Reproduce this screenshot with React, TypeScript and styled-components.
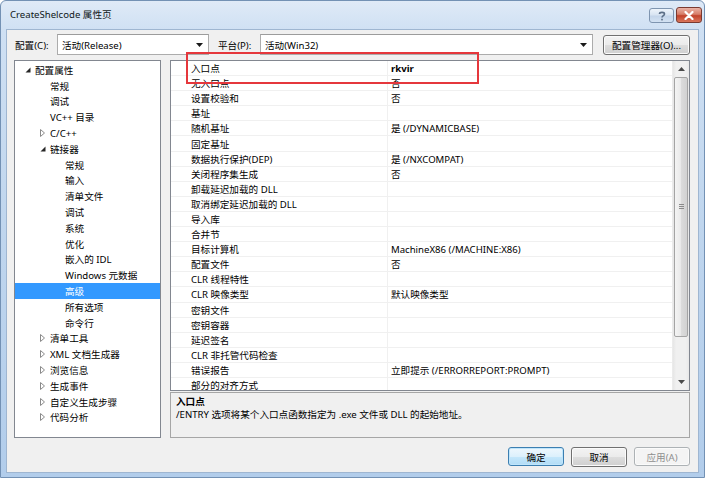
import React from 'react';
import styled, { createGlobalStyle } from 'styled-components';

const GlobalStyle = createGlobalStyle`
  html, body {
    margin: 0;
    padding: 0;
    background: #ffffff;
  }
  body {
    font-family: "Noto Sans", "Noto Sans CJK SC", sans-serif;
    font-size: 9.6px;
    color: #000000;
  }
  * {
    box-sizing: border-box;
  }
`;

type TreeItem = {
  label: string;
  level: number;
  arrow?: 'open' | 'closed';
  selected?: boolean;
};

const treeItems: TreeItem[] = [
  { label: '配置属性', level: 0, arrow: 'open' },
  { label: '常规', level: 1 },
  { label: '调试', level: 1 },
  { label: 'VC++ 目录', level: 1 },
  { label: 'C/C++', level: 1, arrow: 'closed' },
  { label: '链接器', level: 1, arrow: 'open' },
  { label: '常规', level: 2 },
  { label: '输入', level: 2 },
  { label: '清单文件', level: 2 },
  { label: '调试', level: 2 },
  { label: '系统', level: 2 },
  { label: '优化', level: 2 },
  { label: '嵌入的 IDL', level: 2 },
  { label: 'Windows 元数据', level: 2 },
  { label: '高级', level: 2, selected: true },
  { label: '所有选项', level: 2 },
  { label: '命令行', level: 2 },
  { label: '清单工具', level: 1, arrow: 'closed' },
  { label: 'XML 文档生成器', level: 1, arrow: 'closed' },
  { label: '浏览信息', level: 1, arrow: 'closed' },
  { label: '生成事件', level: 1, arrow: 'closed' },
  { label: '自定义生成步骤', level: 1, arrow: 'closed' },
  { label: '代码分析', level: 1, arrow: 'closed' },
];

type Prop = { name: string; value?: string; bold?: boolean };

const props: Prop[] = [
  { name: '入口点', value: 'rkvir', bold: true },
  { name: '无入口点', value: '否' },
  { name: '设置校验和', value: '否' },
  { name: '基址' },
  { name: '随机基址', value: '是 (/DYNAMICBASE)' },
  { name: '固定基址' },
  { name: '数据执行保护(DEP)', value: '是 (/NXCOMPAT)' },
  { name: '关闭程序集生成', value: '否' },
  { name: '卸载延迟加载的 DLL' },
  { name: '取消绑定延迟加载的 DLL' },
  { name: '导入库' },
  { name: '合并节' },
  { name: '目标计算机', value: 'MachineX86 (/MACHINE:X86)' },
  { name: '配置文件', value: '否' },
  { name: 'CLR 线程特性' },
  { name: 'CLR 映像类型', value: '默认映像类型' },
  { name: '密钥文件' },
  { name: '密钥容器' },
  { name: '延迟签名' },
  { name: 'CLR 非托管代码检查' },
  { name: '错误报告', value: '立即提示 (/ERRORREPORT:PROMPT)' },
  { name: '部分的对齐方式' },
];

const Window = styled.div`
  width: 705px;
  height: 478px;
  display: flex;
  flex-direction: column;
  padding: 0 6px 5px 6px;
  background: linear-gradient(180deg, #dfeaf7 0px, #cfe0f3 30px, #c0d6ee 220px, #b2cdeb 100%);
  border: 1px solid #7391b4;
  border-radius: 6px 6px 0 0;
`;

const TitleBar = styled.div`
  height: 29px;
  display: flex;
  align-items: flex-start;
  padding-left: 3px;
`;

const TitleText = styled.div`
  margin-top: 7px;
  line-height: 14px;
  color: #101820;
`;

const CaptionButtons = styled.div`
  margin-left: auto;
  margin-right: -4px;
  display: flex;
  gap: 2px;
  padding-top: 6px;
`;

const CaptionButton = styled.div<{ $close?: boolean }>`
  width: ${p => (p.$close ? 26 : 25)}px;
  height: ${p => (p.$close ? 16 : 15)}px;
  margin-top: ${p => (p.$close ? 0 : 1)}px;
  border-radius: 3px;
  border: 1px solid ${p => (p.$close ? '#7a3a30' : '#7f95b0')};
  background: ${p =>
    p.$close
      ? 'linear-gradient(180deg, #eab3a6 0%, #d77d68 45%, #c2422a 55%, #d9765c 100%)'
      : 'linear-gradient(180deg, #eef4fb 0%, #d8e4f2 45%, #c4d5ea 55%, #d3e2f3 100%)'};
  display: flex;
  align-items: center;
  justify-content: center;
`;

const Client = styled.div`
  flex: 1;
  display: flex;
  flex-direction: column;
  background: #f0f0f0;
  box-shadow: 0 0 0 1px #9fb6d1;
`;

const ConfigRow = styled.div`
  display: flex;
  align-items: center;
  height: 21px;
  margin-top: 4px;
  padding: 0 8px;
`;

const FieldLabel = styled.div<{ $gap?: number }>`
  width: 42px;
  margin-left: ${p => p.$gap ?? 0}px;
  flex: none;
`;

const Combo = styled.div<{ $width?: number }>`
  ${p => (p.$width ? `width: ${p.$width}px; flex: none;` : 'flex: 1;')}
  height: 21px;
  background: #ffffff;
  border: 1px solid #acacac;
  border-top-color: #9c9c9c;
  display: flex;
  align-items: center;
  padding: 0 5px 0 4px;
`;

const ComboText = styled.div`
  flex: 1;
`;

const Button = styled.div<{ $width: number; $variant?: 'default' | 'disabled' }>`
  width: ${p => p.$width}px;
  height: ${p => (p.$variant ? 19 : 20)}px;
  flex: none;
  display: flex;
  align-items: center;
  justify-content: center;
  border-radius: 3px;
  border: 1px solid
    ${p => (p.$variant === 'default' ? '#3c7fb1' : p.$variant === 'disabled' ? '#adb2b5' : '#707070')};
  color: ${p => (p.$variant === 'disabled' ? '#8f8f8f' : '#000000')};
  background: ${p =>
    p.$variant === 'default'
      ? 'linear-gradient(180deg, #eef7fd 0%, #dcf0fc 50%, #c5e7fb 51%, #b1dcf6 100%)'
      : p.$variant === 'disabled'
      ? '#f4f4f4'
      : 'linear-gradient(180deg, #f3f3f3 0%, #ebebeb 50%, #dddddd 51%, #cfcfcf 100%)'};
  box-shadow: ${p => (p.$variant === 'default' ? 'inset 0 0 0 1px #bfe5fb' : 'inset 0 0 0 1px #fbfbfb')};
`;

const Main = styled.div`
  display: flex;
  gap: 9px;
  height: 378px;
  margin-top: 5px;
  padding: 0 8px 0 7px;
`;

const TreePanel = styled.div`
  width: 147px;
  flex: none;
  background: #ffffff;
  border: 1px solid #828790;
  padding-top: 1px;
  overflow: hidden;
`;

const TreeRow = styled.div<{ $level: number; $selected?: boolean }>`
  height: 15.8px;
  display: flex;
  align-items: center;
  padding-left: ${p => 5 + p.$level * 15}px;
  white-space: nowrap;
  background: ${p => (p.$selected ? '#3399ff' : 'transparent')};
  color: ${p => (p.$selected ? '#ffffff' : '#000000')};
`;

const Expander = styled.div`
  width: 15px;
  flex: none;
  display: flex;
  align-items: center;
  padding-left: 5px;
`;

const RightPane = styled.div`
  flex: 1;
  display: flex;
  flex-direction: column;
  gap: 1px;
  min-width: 0;
`;

const Grid = styled.div`
  position: relative;
  height: 331px;
  flex: none;
  display: flex;
  background: #ffffff;
  border: 1px solid #828790;
`;

const GridRows = styled.div`
  flex: 1;
  overflow: hidden;
`;

const GridRow = styled.div`
  height: 15.1px;
  display: flex;
  align-items: stretch;
  border-bottom: 1px solid #f0f0f0;
  white-space: nowrap;
`;

const NameCell = styled.div`
  width: 217px;
  flex: none;
  display: flex;
  align-items: center;
  padding-left: 20px;
  border-right: 1px solid #f0f0f0;
`;

const ValueCell = styled.div<{ $bold?: boolean }>`
  flex: 1;
  display: flex;
  align-items: center;
  padding-left: 3px;
  font-weight: ${p => (p.$bold ? 700 : 400)};
`;

const ScrollBar = styled.div`
  width: 17px;
  flex: none;
  display: flex;
  flex-direction: column;
  background: linear-gradient(90deg, #e6e6e6 0%, #f0f0f0 20%, #f0f0f0 80%, #e8e8e8 100%);
  border-left: 1px solid #ebebeb;
`;

const ScrollArrow = styled.div`
  height: 16px;
  flex: none;
  display: flex;
  align-items: center;
  justify-content: center;
`;

const ScrollTrack = styled.div`
  flex: 1;
  padding: 0 1px;
`;

const Thumb = styled.div`
  height: 260px;
  border: 1px solid #a4a4a4;
  border-radius: 2px;
  background: linear-gradient(90deg, #f4f4f4 0%, #e9e9e9 50%, #dcdcdc 51%, #d2d2d2 100%);
  display: flex;
  align-items: center;
  justify-content: center;
`;

const Highlight = styled.div`
  position: absolute;
  left: 15px;
  top: -9px;
  width: 293px;
  height: 32px;
  border: 2px solid #e5373c;
  pointer-events: none;
  z-index: 5;
`;

const Description = styled.div`
  flex: 1;
  border: 1px solid #a6a6a6;
  background: #f0f0f0;
  padding: 2px 5px;
  line-height: 13px;
`;

const DescTitle = styled.div`
  font-weight: 700;
`;

const ButtonRow = styled.div`
  display: flex;
  justify-content: flex-end;
  gap: 7px;
  margin-top: 9px;
  padding-right: 8px;
`;

const ExpandedIcon = () => (
  <svg width="6" height="6" viewBox="0 0 6 6">
    <polygon points="5.5,0.5 5.5,5.5 0.5,5.5" fill="#262626" />
  </svg>
);

const CollapsedIcon = () => (
  <svg width="5" height="8" viewBox="0 0 5 8">
    <polygon points="0.5,0.5 4.5,4 0.5,7.5" fill="#ffffff" stroke="#8a8a8a" strokeWidth="1" />
  </svg>
);

const ComboArrow = () => (
  <svg width="7" height="4" viewBox="0 0 7 4">
    <polygon points="0,0 7,0 3.5,4" fill="#1a1a1a" />
  </svg>
);

const ScrollArrowIcon = ({ down }: { down?: boolean }) => (
  <svg width="7" height="4" viewBox="0 0 7 4">
    <polygon points={down ? '0,0 7,0 3.5,4' : '0,4 7,4 3.5,0'} fill="#4a4a4a" />
  </svg>
);

const Grip = () => (
  <svg width="5" height="6" viewBox="0 0 5 6">
    <path d="M0 0.5H5M0 2.5H5M0 4.5H5" stroke="#8a8a8a" strokeWidth="1" />
  </svg>
);

const HelpGlyph = () => (
  <svg width="8" height="10" viewBox="0 0 8 10">
    <path d="M1.5 3 C1.5 0.8 6.5 0.8 6.5 3 C6.5 4.6 4 4.6 4 6.5" fill="none" stroke="#5b6e86" strokeWidth="1.6" />
    <rect x="3.2" y="7.8" width="1.6" height="1.6" fill="#5b6e86" />
  </svg>
);

const CloseGlyph = () => (
  <svg width="10" height="9" viewBox="0 0 10 9">
    <path d="M1.5 1 L8.5 8 M8.5 1 L1.5 8" stroke="#ffffff" strokeWidth="2.2" strokeLinecap="round" />
  </svg>
);

const App = () => {
  return (
    <>
      <GlobalStyle />
      <Window>
        <TitleBar>
          <TitleText>CreateShelcode 属性页</TitleText>
          <CaptionButtons>
            <CaptionButton>
              <HelpGlyph />
            </CaptionButton>
            <CaptionButton $close>
              <CloseGlyph />
            </CaptionButton>
          </CaptionButtons>
        </TitleBar>
        <Client>
          <ConfigRow>
            <FieldLabel>配置(C):</FieldLabel>
            <Combo $width={152}>
              <ComboText>活动(Release)</ComboText>
              <ComboArrow />
            </Combo>
            <FieldLabel $gap={9}>平台(P):</FieldLabel>
            <Combo>
              <ComboText>活动(Win32)</ComboText>
              <ComboArrow />
            </Combo>
            <Button $width={87} style={{ marginLeft: 10 }}>
              配置管理器(O)...
            </Button>
          </ConfigRow>
          <Main>
            <TreePanel>
              {treeItems.map((item, i) => (
                <TreeRow key={i} $level={item.level} $selected={item.selected}>
                  <Expander>
                    {item.arrow === 'open' && <ExpandedIcon />}
                    {item.arrow === 'closed' && <CollapsedIcon />}
                  </Expander>
                  {item.label}
                </TreeRow>
              ))}
            </TreePanel>
            <RightPane>
              <Grid>
                <GridRows>
                  {props.map((p, i) => (
                    <GridRow key={i}>
                      <NameCell>{p.name}</NameCell>
                      <ValueCell $bold={p.bold}>{p.value ?? ''}</ValueCell>
                    </GridRow>
                  ))}
                </GridRows>
                <ScrollBar>
                  <ScrollArrow>
                    <ScrollArrowIcon />
                  </ScrollArrow>
                  <ScrollTrack>
                    <Thumb>
                      <Grip />
                    </Thumb>
                  </ScrollTrack>
                  <ScrollArrow>
                    <ScrollArrowIcon down />
                  </ScrollArrow>
                </ScrollBar>
                <Highlight />
              </Grid>
              <Description>
                <DescTitle>入口点</DescTitle>
                <div>/ENTRY 选项将某个入口点函数指定为 .exe 文件或 DLL 的起始地址。</div>
              </Description>
            </RightPane>
          </Main>
          <ButtonRow>
            <Button $width={56} $variant="default">
              确定
            </Button>
            <Button $width={56}>取消</Button>
            <Button $width={56} $variant="disabled">
              应用(A)
            </Button>
          </ButtonRow>
        </Client>
      </Window>
    </>
  );
};

export default App;
